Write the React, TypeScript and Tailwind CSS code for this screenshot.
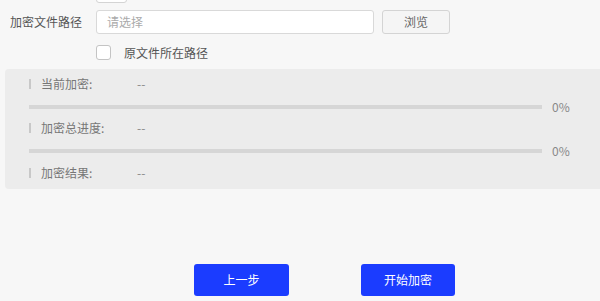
import React from "react";

const font = { fontFamily: '"Noto Sans CJK SC", "Noto Sans", sans-serif' };

function Row({ label }: { label: string }) {
  return (
    <div className="flex items-center h-[18px] pl-[24px]">
      <div className="w-[2px] h-[10px] bg-[#c8c8c8]" />
      <div className="ml-[10px] w-[96px] text-[12px] text-[#777]">{label}</div>
      <div className="text-[12px] text-[#888]">--</div>
    </div>
  );
}

function Bar() {
  return (
    <div className="flex items-center h-[4px] pl-[24px]">
      <div className="w-[513px] h-[4px] bg-[#d6d6d6]" />
      <div className="ml-[10px] text-[12px] leading-[16px] text-[#888]">0%</div>
    </div>
  );
}

export default function App() {
  return (
    <div className="w-[600px] h-[301px] bg-[#f7f7f7] overflow-hidden flex flex-col" style={font}>
      <div className="ml-[96px] mt-[-25px] w-[31px] h-[28px] border border-[#d4d4d4] rounded-[3px] bg-white" />
      <div className="flex items-center mt-[7px] h-[24px]">
        <div className="ml-[10px] w-[86px] text-[12px] text-[#555]">加密文件路径</div>
        <div className="w-[278px] h-[24px] border border-[#d9d9d9] rounded-[3px] bg-white flex items-center pl-[10px] text-[12px] text-[#aaa]">
          请选择
        </div>
        <div className="ml-[8px] w-[68px] h-[24px] border border-[#d4d4d4] rounded-[3px] bg-[#f5f5f5] flex items-center justify-center text-[12px] text-[#666]">
          浏览
        </div>
      </div>
      <div className="flex items-center mt-[11px] h-[15px] ml-[96px]">
        <div className="w-[15px] h-[15px] border border-[#c4c4c4] rounded-[3px] bg-white" />
        <div className="ml-[13px] text-[12px] text-[#555]">原文件所在路径</div>
      </div>
      <div className="ml-[5px] mt-[9px] h-[120px] bg-[#ececec] rounded-l-[4px] flex flex-col pt-[6px]">
        <Row label="当前加密:" />
        <div className="mt-[12px]"><Bar /></div>
        <div className="mt-[10px]"><Row label="加密总进度:" /></div>
        <div className="mt-[12px]"><Bar /></div>
        <div className="mt-[11px]"><Row label="加密结果:" /></div>
      </div>
      <div className="flex mt-[75px] ml-[194px]">
        <div className="w-[95px] h-[32px] bg-[#1b3cff] rounded-[3px] flex items-center justify-center text-[12px] text-white">
          上一步
        </div>
        <div className="ml-[72px] w-[94px] h-[32px] bg-[#1b3cff] rounded-[3px] flex items-center justify-center text-[12px] text-white">
          开始加密
        </div>
      </div>
    </div>
  );
}
